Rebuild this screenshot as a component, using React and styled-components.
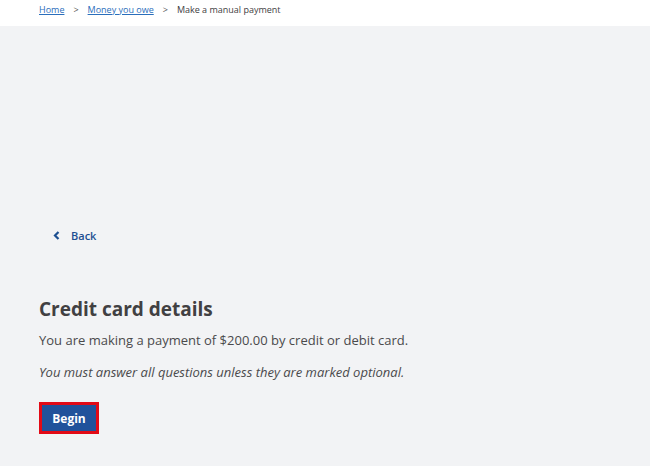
import React from 'react';
import styled, { createGlobalStyle } from 'styled-components';

const GlobalStyle = createGlobalStyle`
  html, body {
    margin: 0;
    padding: 0;
    background: #f2f3f5;
    font-family: "Open Sans", "Noto Sans", sans-serif;
    color: #414042;
  }
`;

const Page = styled.div`
  min-height: 466px;
  background: #f2f3f5;
`;

const Crumbs = styled.nav`
  height: 26px;
  background: #ffffff;
  display: flex;
  align-items: flex-start;
  gap: 9px;
  padding: 3px 0 0 39px;
  box-sizing: border-box;
  font-size: 9px;
  line-height: 13px;
`;

const CrumbLink = styled.a`
  color: #2a6ebb;
  text-decoration: underline;
`;

const Sep = styled.span`
  color: #555;
`;

const Current = styled.span`
  color: #414042;
`;

const Main = styled.main`
  padding: 197px 39px 0 39px;
`;

const BackLink = styled.a`
  display: inline-flex;
  align-items: center;
  gap: 11px;
  margin-left: 14px;
  color: #1d4f91;
  font-size: 11px;
  font-weight: 600;
  text-decoration: none;
`;

const Heading = styled.h1`
  margin: 50px 0 0;
  font-size: 19px;
  line-height: 28px;
  font-weight: 700;
  color: #414042;
`;

const Text = styled.p`
  margin: ${p => p.$top}px 0 0;
  font-size: 13px;
  line-height: 20px;
  font-style: ${p => (p.$italic ? 'italic' : 'normal')};
  color: #4a4a4c;
`;

const Button = styled.button`
  margin-top: 20px;
  width: 60px;
  height: 32px;
  background: #20529b;
  color: #ffffff;
  font-family: inherit;
  font-size: 12px;
  font-weight: 700;
  border: 3px solid #e20a16;
  padding: 0;
  cursor: pointer;
`;

export default function App() {
  return (
    <Page>
      <GlobalStyle />
      <Crumbs>
        <CrumbLink href="#">Home</CrumbLink>
        <Sep>&gt;</Sep>
        <CrumbLink href="#">Money you owe</CrumbLink>
        <Sep>&gt;</Sep>
        <Current>Make a manual payment</Current>
      </Crumbs>
      <Main>
        <BackLink href="#">
          <svg width="7" height="9" viewBox="0 0 7 9">
            <path d="M5.5 1 L2 4.5 L5.5 8" stroke="#1d4f91" strokeWidth="2.2" fill="none" />
          </svg>
          Back
        </BackLink>
        <Heading>Credit card details</Heading>
        <Text $top={7}>You are making a payment of $200.00 by credit or debit card.</Text>
        <Text $top={12} $italic>You must answer all questions unless they are marked optional.</Text>
        <Button>Begin</Button>
      </Main>
    </Page>
  );
}
